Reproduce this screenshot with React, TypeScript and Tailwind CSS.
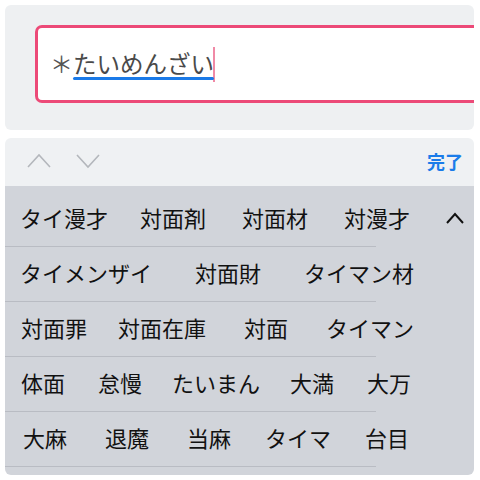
import React from "react";

const rows: { words: string[]; ml: number[] }[] = [
  { words: ["タイ漫才", "対面剤", "対面材", "対漫才"], ml: [15, 32, 36, 36] },
  { words: ["タイメンザイ", "対面財", "タイマン材"], ml: [15, 43, 43] },
  { words: ["対面罪", "対面在庫", "対面", "タイマン"], ml: [16, 31, 38, 38] },
  { words: ["体面", "怠慢", "たいまん", "大満", "大万"], ml: [16, 33, 30, 30, 33] },
  { words: ["大麻", "退魔", "当麻", "タイマ", "台目"], ml: [18, 38, 38, 34, 34] },
];

export default function App() {
  const font = { fontFamily: '"Noto Sans CJK JP", "Noto Sans", sans-serif' };
  return (
    <div className="w-[480px] h-[480px] bg-white p-[5px] flex flex-col gap-[8px]" style={font}>
      <div className="h-[125px] w-[469px] rounded-[6px] bg-[#eef0f2] overflow-hidden pt-[20px] pl-[30px]">
        <div className="w-[480px] h-[78px] border-[3px] border-[#ec4a78] rounded-[7px] bg-white flex items-center pl-[12px] pb-[2px]">
          <span className="text-[23px] leading-[30px] text-[#555]">＊</span>
          <span className="relative text-[23.5px] leading-[30px] text-[#4a4a4a]">
            たいめんざい
            <span className="absolute left-0 right-0 bottom-[-2px] h-[3px] rounded-full bg-[#1a7ae8]" />
          </span>
          <span className="w-[2px] h-[35px] bg-[#f08aa6] mt-[2px] ml-[-1px]" />
        </div>
      </div>
      <div className="w-[469px] h-[337px] rounded-[6px] overflow-hidden flex flex-col">
        <div className="h-[48px] bg-[#eff1f3] flex items-center pl-[22px] pr-[11px]">
          <svg width="24" height="16" viewBox="0 0 24 16" className="mt-[-2px]">
            <polyline points="1,14 12,2 23,14" fill="none" stroke="#b4b7bc" strokeWidth="1.6" />
          </svg>
          <svg width="24" height="16" viewBox="0 0 24 16" className="ml-[25px] mt-[-2px]">
            <polyline points="1,2 12,14 23,2" fill="none" stroke="#b4b7bc" strokeWidth="1.6" />
          </svg>
          <span className="ml-auto text-[18px] font-bold text-[#1a7ce9] leading-none mb-[2px]">完了</span>
        </div>
        <div className="flex-1 bg-[#d1d4da] flex flex-col">
          {rows.map((r, i) => (
            <div
              key={i}
              className={`${i === 0 ? "h-[61px] pt-[6px]" : "h-[55px]"} relative flex items-center pb-[6px]`}
            >
              {r.words.map((w, j) => (
                <span
                  key={j}
                  className="text-[22px] leading-[30px] text-[#111]"
                  style={{ marginLeft: r.ml[j] }}
                >
                  {w}
                </span>
              ))}
              {i === 0 && (
                <svg width="20" height="14" viewBox="0 0 20 14" className="absolute right-[9px] top-[25px]">
                  <polyline points="2,12 10,3 18,12" fill="none" stroke="#111" strokeWidth="2" />
                </svg>
              )}
              <div className="absolute left-0 bottom-0 w-[371px] h-[1px] bg-[#b9bcc3]" />
            </div>
          ))}
        </div>
      </div>
    </div>
  );
}
